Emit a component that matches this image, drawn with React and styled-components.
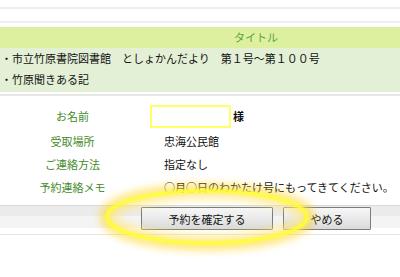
import React from "react";
import styled, { createGlobalStyle } from "styled-components";

const GlobalStyle = createGlobalStyle`
  html, body {
    margin: 0;
    padding: 0;
    background: #fff;
  }
  body {
    font-family: "Noto Sans CJK JP", "Noto Sans", sans-serif;
    font-size: 11px;
    color: #111;
  }
`;

const Page = styled.div`
  position: relative;
  width: 400px;
  height: 277px;
  overflow: hidden;
  background: #fff;
`;

const Rule = styled.div`
  height: ${(p) => p.$h || 2}px;
  margin-top: ${(p) => p.$gap}px;
  background: ${(p) => p.$color || "#efefef"};
`;

const TitleBar = styled.div`
  margin-top: 4px;
  height: 21px;
  line-height: 21px;
  padding-left: 112px;
  text-align: center;
  background: #ddf0a0;
  color: #5ea336;
  font-size: 11px;
`;

const ListBody = styled.div`
  background: #e4f0d6;
  padding-bottom: 2px;
`;

const ListRow = styled.div`
  height: 21px;
  line-height: 21px;
  padding-left: 1px;
  white-space: pre;
  font-size: 11px;
  color: #111;
`;

const FormGrid = styled.div`
  display: grid;
  grid-template-columns: 145px 1fr;
  grid-template-rows: 26px;
  grid-auto-rows: 23px;
  padding: 7px 0;
  align-items: center;
`;

const Label = styled.div`
  text-align: center;
  color: #438b26;
  font-size: 11px;
`;

const Value = styled.div`
  display: flex;
  align-items: center;
  padding-left: ${(p) => p.$indent || 0}px;
  font-size: 11px;
  color: #111;
  white-space: nowrap;
`;

const NameInput = styled.div`
  box-sizing: border-box;
  margin-left: 5px;
  width: 81px;
  height: 23px;
  border: 2px solid #ffff66;
  background: #fff;
`;

const Honorific = styled.span`
  margin-left: 2px;
  font-weight: bold;
`;

const ButtonBar = styled.div`
  display: flex;
  align-items: flex-start;
  justify-content: center;
  gap: 10px;
  height: 21px;
  padding: 1px 0 0 112px;
  border-top: 1px solid #d9d9d9;
  background: linear-gradient(#ebebeb 0, #ebebeb 10px, #f4f4f4 10px);
`;

const Button = styled.button`
  flex: none;
  box-sizing: border-box;
  width: ${(p) => p.$w}px;
  height: 23px;
  padding: 0;
  border: 1px solid #7c7c7c;
  border-radius: 1px;
  background: linear-gradient(#f7f7f7, #e9e9e9 50%, #dadada);
  font-family: "Noto Sans CJK JP", "Noto Sans", sans-serif;
  font-size: 11px;
  color: #111;
  position: relative;
  z-index: 1;
`;

const Glow = styled.svg`
  position: absolute;
  left: 0;
  top: 0;
  pointer-events: none;
  z-index: 2;
`;

export default function App() {
  return (
    <Page>
      <GlobalStyle />
      <Rule $gap={7} />
      <Rule $gap={12} />
      <TitleBar>タイトル</TitleBar>
      <ListBody>
        <ListRow>・市立竹原書院図書館　としょかんだより　第１号～第１００号</ListRow>
        <ListRow>・竹原聞きある記</ListRow>
      </ListBody>
      <Rule $gap={2} $color="#e8e8e8" />
      <FormGrid>
        <Label>お名前</Label>
        <Value>
          <NameInput />
          <Honorific>様</Honorific>
        </Value>
        <Label>受取場所</Label>
        <Value $indent={19}>忠海公民館</Value>
        <Label>ご連絡方法</Label>
        <Value $indent={19}>指定なし</Value>
        <Label>予約連絡メモ</Label>
        <Value $indent={19}>○月○日のわかたけ号にもってきてください。</Value>
      </FormGrid>
      <ButtonBar>
        <Button $w={132}>予約を確定する</Button>
        <Button $w={88}>やめる</Button>
      </ButtonBar>
      <Rule $gap={6} $h={1} $color="#e4e4e4" />
      <Glow width="400" height="277" viewBox="0 0 400 277">
        <defs>
          <filter id="blur" x="-20%" y="-60%" width="140%" height="220%">
            <feGaussianBlur stdDeviation="4" />
          </filter>
          <filter id="soft" x="-20%" y="-50%" width="140%" height="200%">
            <feGaussianBlur stdDeviation="0.8" />
          </filter>
        </defs>
        <ellipse cx="207" cy="217" rx="100" ry="26" fill="none" stroke="#ffd000" strokeWidth="14" opacity="0.55" filter="url(#blur)" />
        <ellipse cx="207" cy="217" rx="96" ry="22" fill="none" stroke="#ffffff" strokeWidth="6" opacity="0.5" filter="url(#blur)" />
        <ellipse cx="207" cy="217" rx="100" ry="26" fill="none" stroke="#ffff30" strokeWidth="3.5" filter="url(#soft)" />
      </Glow>
    </Page>
  );
}
